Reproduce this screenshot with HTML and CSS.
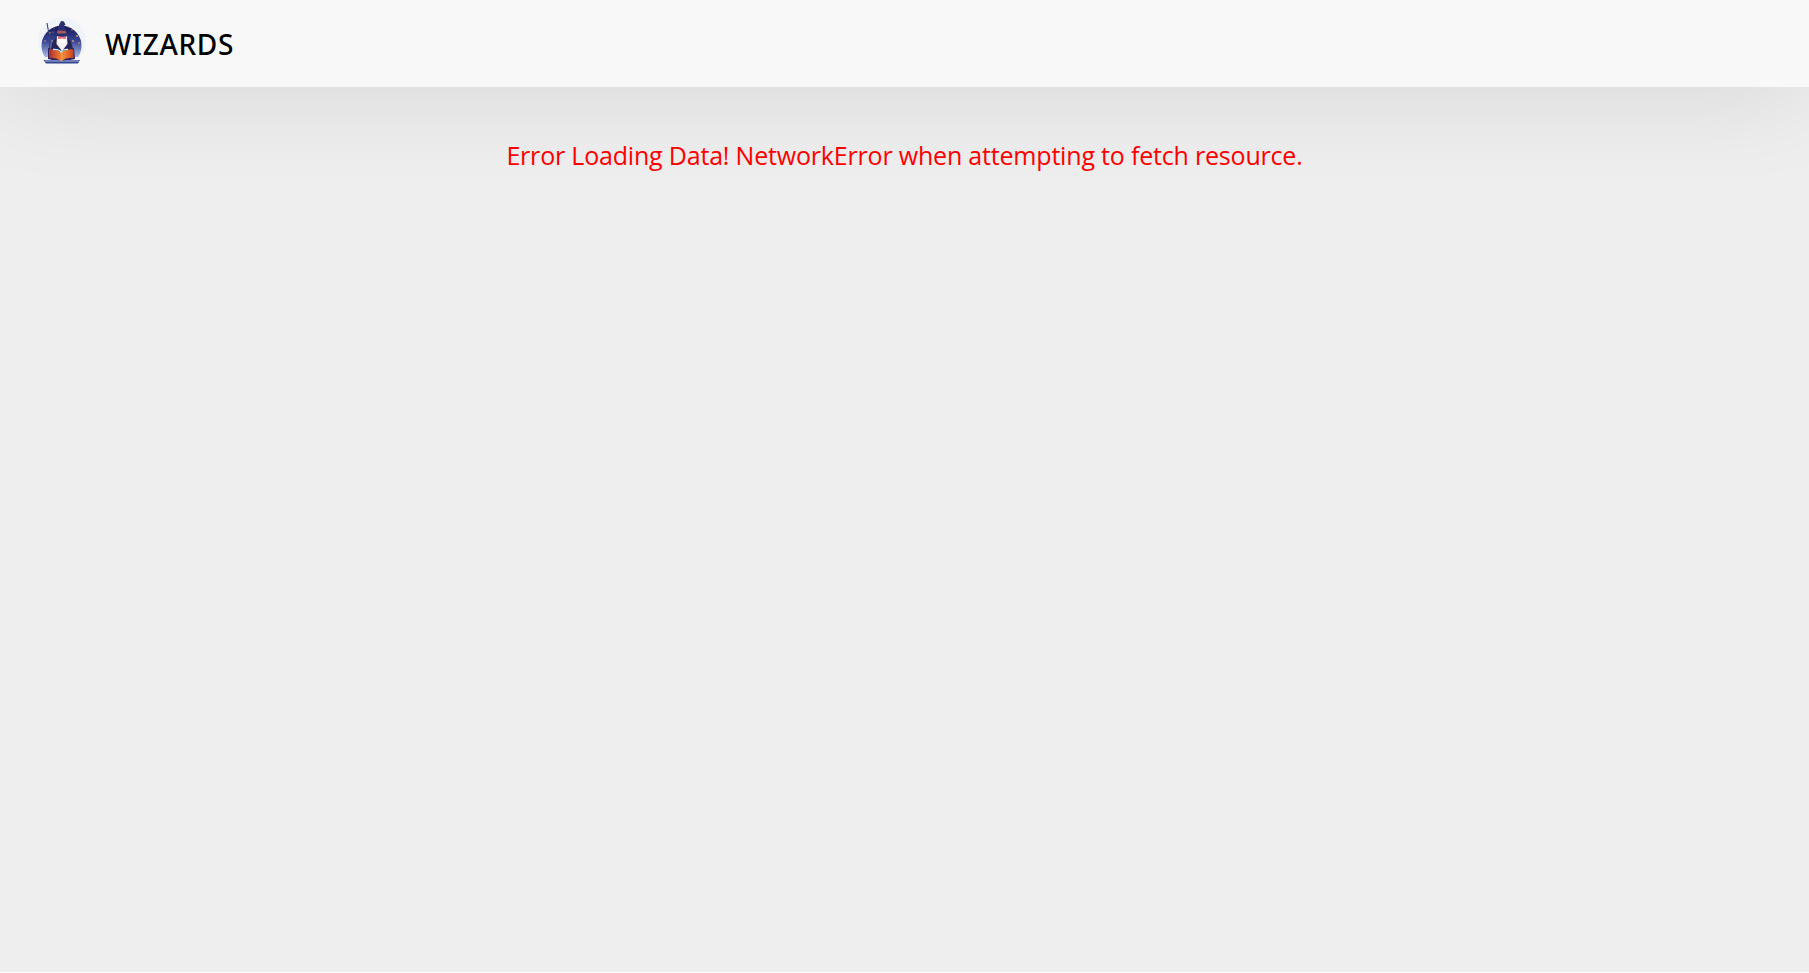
FILE: index.html
```html
<!DOCTYPE html>
<html lang="en">
<head>
<meta charset="utf-8">
<title>Wizards</title>
<link rel="stylesheet" href="styles.css">
</head>
<body>
<header class="header">
  <svg class="logo" viewBox="0 0 64 64" aria-hidden="true">
    <defs>
      <linearGradient id="sky" x1="0" y1="0" x2="0" y2="1"><stop offset="0" stop-color="#15165a"/><stop offset=".5" stop-color="#3a4795"/><stop offset="1" stop-color="#a9b9e2"/></linearGradient>
      <linearGradient id="pageL"><stop offset="0" stop-color="#a82c30"/><stop offset="1" stop-color="#f5822e"/></linearGradient>
      <linearGradient id="pageR"><stop offset="0" stop-color="#fb9a3c"/><stop offset="1" stop-color="#c9401f"/></linearGradient>
    </defs>
    <circle cx="32" cy="31" r="24" fill="#f0f3fa"/>
    <path d="M15 47A20 20 0 1 1 48 47Z" fill="url(#sky)"/>
    <g fill="#e6a663">
      <circle cx="20" cy="23" r=".8"/><circle cx="24" cy="18" r=".6"/><circle cx="42" cy="20" r=".7"/><circle cx="47" cy="26" r=".9"/><circle cx="43" cy="31" r=".9"/><circle cx="49" cy="33" r=".8"/><circle cx="22" cy="31" r=".8"/><circle cx="15" cy="31" r=".7"/><circle cx="39" cy="17" r=".6"/><circle cx="23" cy="22" r=".6"/>
    </g>
    <path d="M17 13L19.5 27V43" fill="none" stroke="#38416f" stroke-width="1.1"/>
    <path d="M20 42L23 31L26 28H38L41 32L44 42Z" fill="#272457"/>
    <path d="M27 26H37L37.500 34L32 41L26.500 34Z" fill="#f5f1fa"/>
    <path d="M28 26H36V29H28Z" fill="#e77887"/>
    <path d="M28 30L32 28.500L36 30L35 33H29Z" fill="#fff"/>
    <path d="M27 22L29 15L31 11L34 11.500L35.500 15L34 15.500L36.500 22L42 25Q32 28.500 23 25Z" fill="#2b2f72"/>
    <path d="M27.500 20.500L35.500 21L36.500 23.500H27Z" fill="#a75c58"/>
    <path d="M18 38L31 41V52L18 49Z" fill="#34265d"/><path d="M44 38L31 41V52L45 49Z" fill="#34265d"/>
    <path d="M19 39.500Q26 38.500 31 42V51Q25 47 19 48Z" fill="url(#pageL)"/>
    <path d="M31 42Q36 38.500 43.500 39.500V48Q37 47 31 51Z" fill="url(#pageR)"/>
    <path d="M23 39.500Q29 39 31 42Q33 39 38 39.500" fill="none" stroke="#b9e9ff" stroke-width="1.3"/>
    <path d="M13.500 50H27L30 51H34L37 50H50L48 53.500H16Z" fill="#33458d"/>
    <path d="M15 51H49" stroke="#dce6ff" stroke-width=".7"/>
  </svg>
  <h1 class="brand">WIZARDS</h1>
</header>
<main class="content">
  <p class="error">Error Loading Data! NetworkError when attempting to fetch resource.</p>
</main>
</body>
</html>
```
FILE: styles.css
```css
* { box-sizing: border-box; }
html { background: #fff; }
body {
  margin: 0;
  height: 972px;
  background: #eee;
  font-family: "Segoe UI", "Noto Sans", sans-serif;
}
.header {
  display: flex;
  align-items: center;
  height: 87px;
  padding: 0 30px 3px;
  background: #f8f8f8;
  box-shadow: 0 5px 100px rgba(0, 0, 0, 0.1);
}
.logo { width: 64px; height: 64px; }
.brand {
  margin: 3px 0 0 11px;
  color: #000;
  font-size: 28px;
  font-weight: 500;
  letter-spacing: 0.7px;
  line-height: 36px;
}
.content { padding-top: 50px; }
.error {
  margin: 0;
  color: #f00;
  font-family: "Segoe UI", "Open Sans", sans-serif;
  font-size: 25px;
  letter-spacing: -0.19px;
  line-height: 36px;
  text-align: center;
}
```
